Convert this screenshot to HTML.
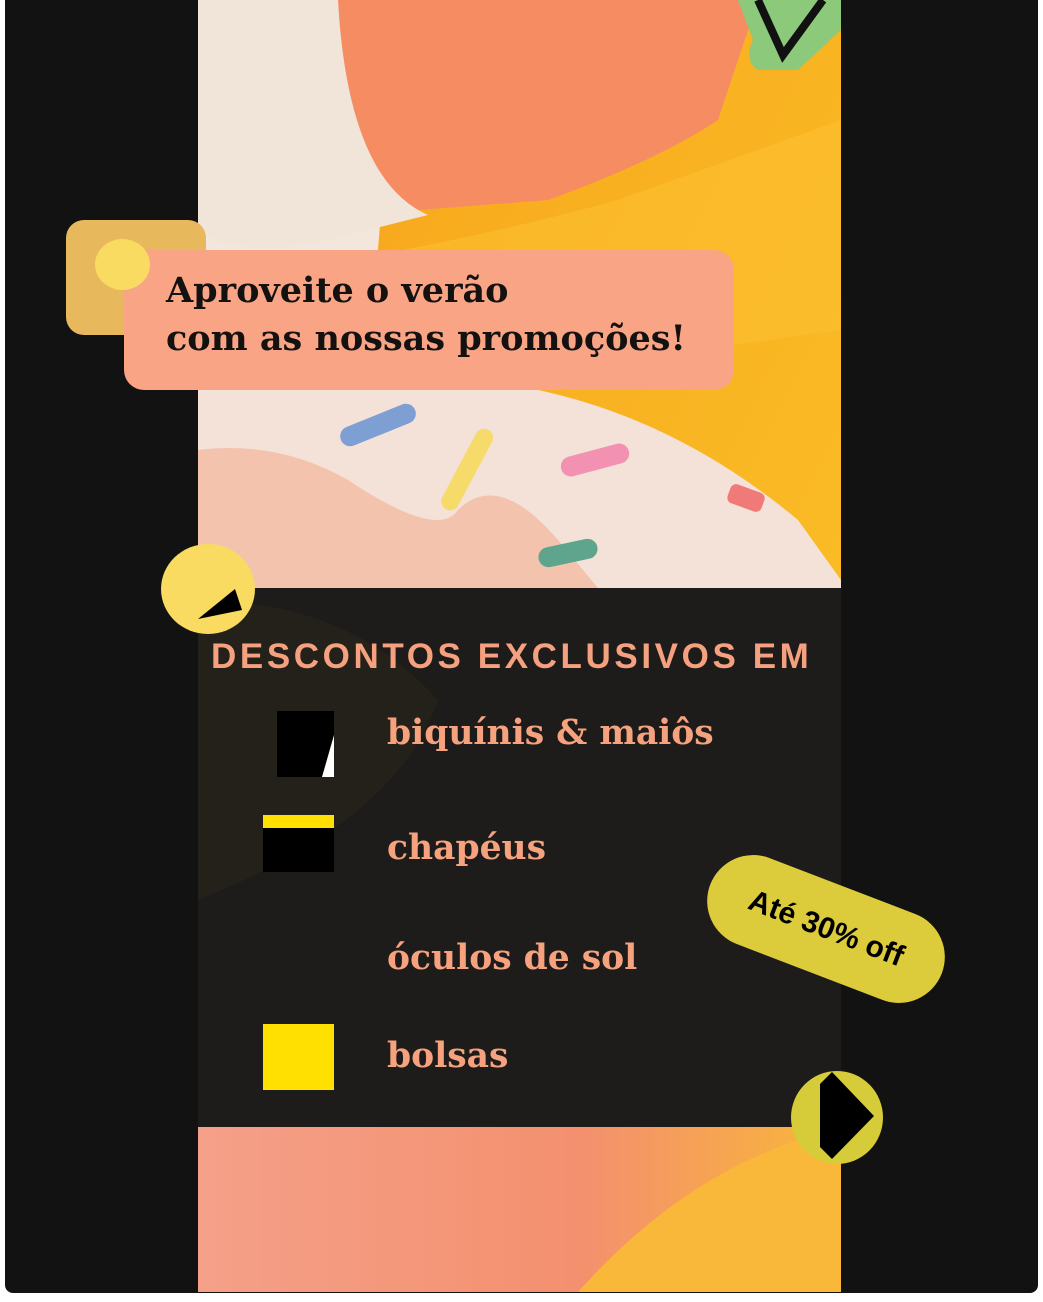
<!DOCTYPE html>
<html><head><meta charset="utf-8"><style>
html,body{margin:0;padding:0;background:#fff;}
.wrap{position:relative;width:1043px;height:1302px;overflow:hidden;background:#fff;}
.frame{position:absolute;left:5px;top:0;width:1033px;height:1293px;background:#121212;border-radius:0 0 8px 8px;}
.serif{font-family:"DejaVu Serif","Liberation Serif",serif;font-weight:bold;}
.sans{font-family:"Liberation Sans",sans-serif;font-weight:bold;}
</style></head><body><div class="wrap">
<div class="frame"></div>
<svg style="position:absolute;left:198px;top:0" width="643" height="1292" viewBox="0 0 643 1292">
<defs>
<linearGradient id="yo" x1="0" y1="0" x2="1" y2="1"><stop offset="0" stop-color="#f7a21a"/><stop offset="1" stop-color="#fbc52a"/></linearGradient>
<linearGradient id="bt" x1="0" y1="0" x2="1" y2="0"><stop offset="0" stop-color="#f5a089"/><stop offset="0.6" stop-color="#f3906e"/><stop offset="1" stop-color="#f9b738"/></linearGradient>
</defs>
<rect width="643" height="1292" fill="url(#yo)"/>
<path d="M0 0 H200 L180 250 Q160 300 0 300 Z" fill="#f3e6dc"/>
<path d="M0 280 Q200 260 420 200 L643 120 V330 L0 420Z" fill="#fbc030" opacity="0.6"/>
<path d="M140 0 H560 L520 120 Q460 160 350 200 L220 210 Q150 200 145 120 Z" fill="#f58c62"/>
<path d="M0 0 H140 Q150 180 230 215 L130 240 Q40 260 0 230Z" fill="#f1e4d8"/>
<path d="M540 0 H643 V30 L600 70 L560 70 Q545 60 555 40Z" fill="#8cc97a"/>
<path d="M560 0 L585 55 L625 0" stroke="#111" stroke-width="8" fill="none"/>
<path d="M0 390 L340 390 Q480 420 600 520 L643 580 V588 H0Z" fill="#f4e1d7"/>
<path d="M0 450 Q80 440 150 480 Q240 540 260 510 Q300 470 360 540 L400 588 H0Z" fill="#f3c3ad"/>
<rect x="140" y="415" width="80" height="20" rx="10" fill="#7d9fd4" transform="rotate(-22 180 425)"/>
<rect x="225" y="460" width="90" height="18" rx="9" fill="#f6da6a" transform="rotate(-62 270 470)"/>
<rect x="362" y="450" width="70" height="20" rx="10" fill="#f391b2" transform="rotate(-15 397 460)"/>
<rect x="530" y="488" width="36" height="20" rx="6" fill="#ef7a78" transform="rotate(20 548 498)"/>
<rect x="340" y="543" width="60" height="20" rx="10" fill="#5fa48c" transform="rotate(-12 370 553)"/>
<rect x="0" y="588" width="643" height="539" fill="#1e1c1a"/>
<path d="M0 600 Q150 600 240 700 Q200 820 0 900Z" fill="#24211a"/>
<rect x="0" y="1127" width="643" height="165" fill="url(#bt)"/>
<path d="M380 1292 Q480 1180 600 1140 L643 1127 V1292Z" fill="#f9b83a"/>
</svg>
<div style="position:absolute;left:66px;top:220px;width:140px;height:115px;background:#e8b95c;border-radius:18px;"></div>
<div style="position:absolute;left:124px;top:250px;width:610px;height:140px;background:#f9a585;border-radius:20px;"></div>
<div style="position:absolute;left:95px;top:239px;width:55px;height:51px;background:#f8db60;border-radius:50%;"></div>
<div class="serif" style="position:absolute;left:166px;top:267px;font-size:35px;line-height:48px;color:#141210;white-space:nowrap;">Aproveite o verão<br>com as nossas promoções!</div>
<div style="position:absolute;left:161px;top:544px;width:94px;height:90px;background:#f8db60;border-radius:50%;"></div>
<svg style="position:absolute;left:195px;top:585px" width="50" height="35"><polygon points="3,34 40,4 47,25" fill="#000"/></svg>
<div class="sans" style="position:absolute;left:211px;top:637px;font-size:35px;letter-spacing:3.6px;color:#f5a07e;white-space:nowrap;">DESCONTOS EXCLUSIVOS EM</div>
<div style="position:absolute;left:277px;top:711px;width:57px;height:66px;background:#000;"></div>
<svg style="position:absolute;left:320px;top:735px" width="15" height="43"><polygon points="14,0 14,42 2,42" fill="#fff"/></svg>
<div style="position:absolute;left:263px;top:815px;width:71px;height:57px;background:#000;"></div>
<div style="position:absolute;left:263px;top:815px;width:71px;height:13px;background:#ffe000;"></div>
<div style="position:absolute;left:263px;top:1024px;width:71px;height:66px;background:#ffe000;"></div>
<div class="serif" style="position:absolute;left:387px;top:713px;font-size:34.5px;color:#f6a27f;white-space:nowrap;">biquínis &amp; maiôs</div>
<div class="serif" style="position:absolute;left:387px;top:828px;font-size:34.5px;color:#f6a27f;">chapéus</div>
<div class="serif" style="position:absolute;left:387px;top:938px;font-size:34.5px;color:#f6a27f;white-space:nowrap;">óculos de sol</div>
<div class="serif" style="position:absolute;left:387px;top:1036px;font-size:34.5px;color:#f6a27f;">bolsas</div>
<div style="position:absolute;left:702px;top:883px;width:248px;height:92px;background:#dccb3b;border-radius:46px;transform:rotate(21deg);display:flex;align-items:center;justify-content:center;">
<span class="sans" style="font-size:30px;color:#000;">Até 30% off</span></div>
<div style="position:absolute;left:791px;top:1071px;width:92px;height:93px;background:#d6cc3a;border-radius:50%;"></div>
<svg style="position:absolute;left:818px;top:1072px" width="58" height="88"><polygon points="2,12 14,0 56,44 14,87 2,75" fill="#000"/></svg>
</div></body></html>
